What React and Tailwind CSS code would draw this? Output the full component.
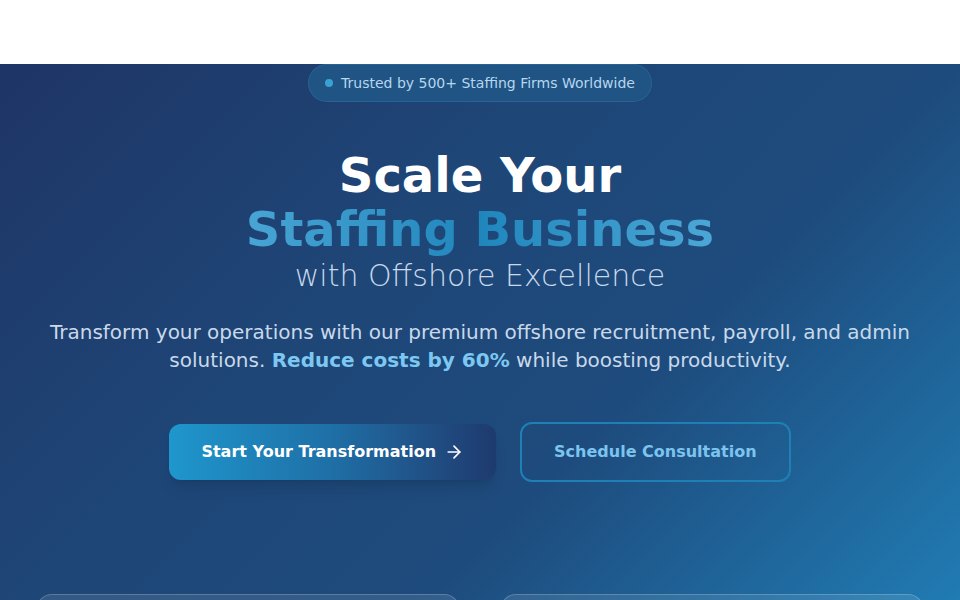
import React from 'react';
import { ArrowRight } from 'lucide-react';

const font = { fontFamily: '"DejaVu Sans", "Noto Sans", sans-serif' };

function Badge() {
    return (
        <div className="inline-flex items-center gap-2 rounded-full border border-[#2b6a9c]/70 bg-[#1f5484] px-4 py-2">
            <span className="h-2 w-2 rounded-full bg-[#3ba0d2]"></span>
            <span className="text-sm leading-5 text-[#b7d6ef]">Trusted by 500+ Staffing Firms Worldwide</span>
        </div>
    );
}

function Card({ title, text }) {
    return (
        <div className="rounded-2xl border border-white/20 bg-white/10 p-8 h-[200px]">
            <h3 className="text-xl font-bold text-white">{title}</h3>
            <p className="mt-3 text-base text-[#c6d7ea]">{text}</p>
        </div>
    );
}

export default function App() {
    return (
        <div className="min-h-screen bg-white" style={font}>
            {/* Header */}
            <div className="h-16 bg-white"></div>

            {/* Hero */}
            <section className="bg-[linear-gradient(135deg,#1e3566_0%,#1e4677_32%,#1e4b7d_55%,#2080b8_88%,#2183ba_100%)] pb-16">
                <div className="flex flex-col items-center text-center">
                    <Badge />

                    <h1 className="mt-[46px] flex flex-col font-bold">
                        <span className="text-5xl leading-[54px] text-white">Scale Your</span>
                        <span className="text-5xl leading-[54px] bg-gradient-to-r from-[#48a5d4] via-[#1f86bc] to-[#4ba7d6] bg-clip-text text-transparent">
                            Staffing Business
                        </span>
                        <span className="mt-0.5 text-3xl leading-9 font-extralight text-[#c7d8ea]">with Offshore Excellence</span>
                    </h1>

                    <p className="mt-6 max-w-4xl text-xl leading-7 text-[#c9d9ea]">
                        Transform your operations with our premium offshore recruitment, payroll, and admin solutions.{' '}
                        <span className="font-bold text-[#7cc8f2]">Reduce costs by 60%</span> while boosting productivity.
                    </p>

                    <div className="mt-12 flex items-center gap-6">
                        <button className="flex items-center gap-2 rounded-xl bg-gradient-to-r from-[#1e97cd] via-[#1e6fa6] to-[#1e3a6e] px-8 py-4 text-base leading-6 font-bold text-white shadow-lg">
                            Start Your Transformation
                            <ArrowRight className="h-5 w-5" />
                        </button>
                        <button className="rounded-xl border-2 border-[#1f80b6] px-8 py-4 text-base leading-6 font-bold text-[#7cc4ee]">
                            Schedule Consultation
                        </button>
                    </div>
                </div>

                <div className="mt-28 grid grid-cols-2 gap-10 px-9">
                    <Card title="Recruitment Solutions" text="Dedicated offshore recruiters sourcing top talent around the clock." />
                    <Card title="Payroll & Admin" text="Accurate, compliant back-office support that scales with your business." />
                </div>
            </section>
        </div>
    );
}
